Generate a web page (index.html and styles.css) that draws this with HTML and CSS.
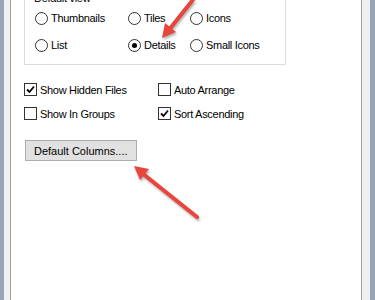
FILE: index.html
```html
<!DOCTYPE html>
<html lang="en">
<head>
  <meta charset="UTF-8">
  <title>Folder Options</title>
  <link rel="stylesheet" href="styles.css">
</head>
<body>
  <div class="window">
    <div class="panel">

      <!-- DEFAULT VIEW -->
      <div class="group">
        <div class="group-title">Default view</div>
        <div class="radios">
          <label class="radio"><span class="dot"></span>Thumbnails</label>
          <label class="radio"><span class="dot"></span>Tiles</label>
          <label class="radio"><span class="dot"></span>Icons</label>
          <label class="radio"><span class="dot"></span>List</label>
          <label class="radio"><span class="dot checked"></span>Details</label>
          <label class="radio"><span class="dot"></span>Small Icons</label>
        </div>
      </div>

      <!-- OPTIONS -->
      <div class="checks">
        <label class="check">
          <span class="box"><svg width="11" height="11" viewBox="0 0 11 11"><polyline points="2,5.5 4.5,8 9,2.5" /></svg></span>
          Show Hidden Files
        </label>
        <label class="check"><span class="box"></span>Auto Arrange</label>
        <label class="check"><span class="box"></span>Show In Groups</label>
        <label class="check">
          <span class="box"><svg width="11" height="11" viewBox="0 0 11 11"><polyline points="2,5.5 4.5,8 9,2.5" /></svg></span>
          Sort Ascending
        </label>
      </div>

      <button class="btn">Default Columns....</button>
    </div>

    <!-- annotation arrows -->
    <svg class="arrows" width="375" height="300" viewBox="0 0 375 300">
      <line x1="196" y1="-4" x2="168" y2="31" />
      <polygon points="162,38 176,32 165,23" />
      <line x1="197" y1="217" x2="142" y2="173" />
      <polygon points="134,166 149,169 140,180" />
    </svg>
  </div>
</body>
</html>
```

FILE: styles.css
```css
body {
  margin: 0;
  padding: 0;
  overflow: hidden;
  font-family: "Liberation Sans", Arial, sans-serif;
  font-size: 11px;
  letter-spacing: -0.3px;
  color: #000;
}

.window {
  position: relative;
  display: flex;
  height: 300px;
  background-color: #f0f0f0;
  border-left: 4px solid #97a5b9;
  border-right: 5px solid #97a5b9;
  padding: 0 8px 0 6px;
}

.panel {
  flex: 1;
  background-color: #fff;
  border-left: 1px solid #a0a0a0;
  border-right: 1px solid #a0a0a0;
  padding-left: 13px;
}

.group {
  width: 250px;
  margin-top: -9px;
  border: 1px solid #dcdcdc;
  padding: 0 0 10px 10px;
}

.group-title {
  line-height: 13px;
  margin: 0 0 4px -1px;
}

.radios {
  display: grid;
  grid-template-columns: 93px 62px auto;
  row-gap: 9px;
}

.radio {
  display: flex;
  align-items: center;
  gap: 3px;
  height: 18px;
}

.dot {
  width: 11px;
  height: 11px;
  border: 1px solid #333;
  border-radius: 50%;
  background-color: #fff;
  display: flex;
  align-items: center;
  justify-content: center;
}

.dot.checked::after {
  content: "";
  width: 5px;
  height: 5px;
  border-radius: 50%;
  background-color: #000;
}

.checks {
  display: grid;
  grid-template-columns: 134px auto;
  row-gap: 11px;
  margin-top: 18px;
}

.check {
  display: flex;
  align-items: center;
  gap: 3px;
  height: 13px;
}

.box {
  width: 11px;
  height: 11px;
  border: 1px solid #333;
  background-color: #fff;
  display: flex;
}

.box polyline {
  fill: none;
  stroke: #000;
  stroke-width: 1.8;
}

.btn {
  display: block;
  margin: 20px 0 0 1px;
  width: 112px;
  height: 21px;
  padding: 0 0 0 8px;
  text-align: left;
  font-family: inherit;
  font-size: 11px;
  letter-spacing: 0;
  color: #000;
  background-color: #e1e1e1;
  border: 1px solid #adadad;
  border-radius: 0;
}

.arrows {
  position: absolute;
  top: 0;
  left: -4px;
  filter: drop-shadow(1px 2px 1px rgba(0, 0, 0, 0.3));
}

.arrows line {
  stroke: #e8453c;
  stroke-width: 4;
  stroke-linecap: round;
}

.arrows polygon {
  fill: #e8453c;
}
```
